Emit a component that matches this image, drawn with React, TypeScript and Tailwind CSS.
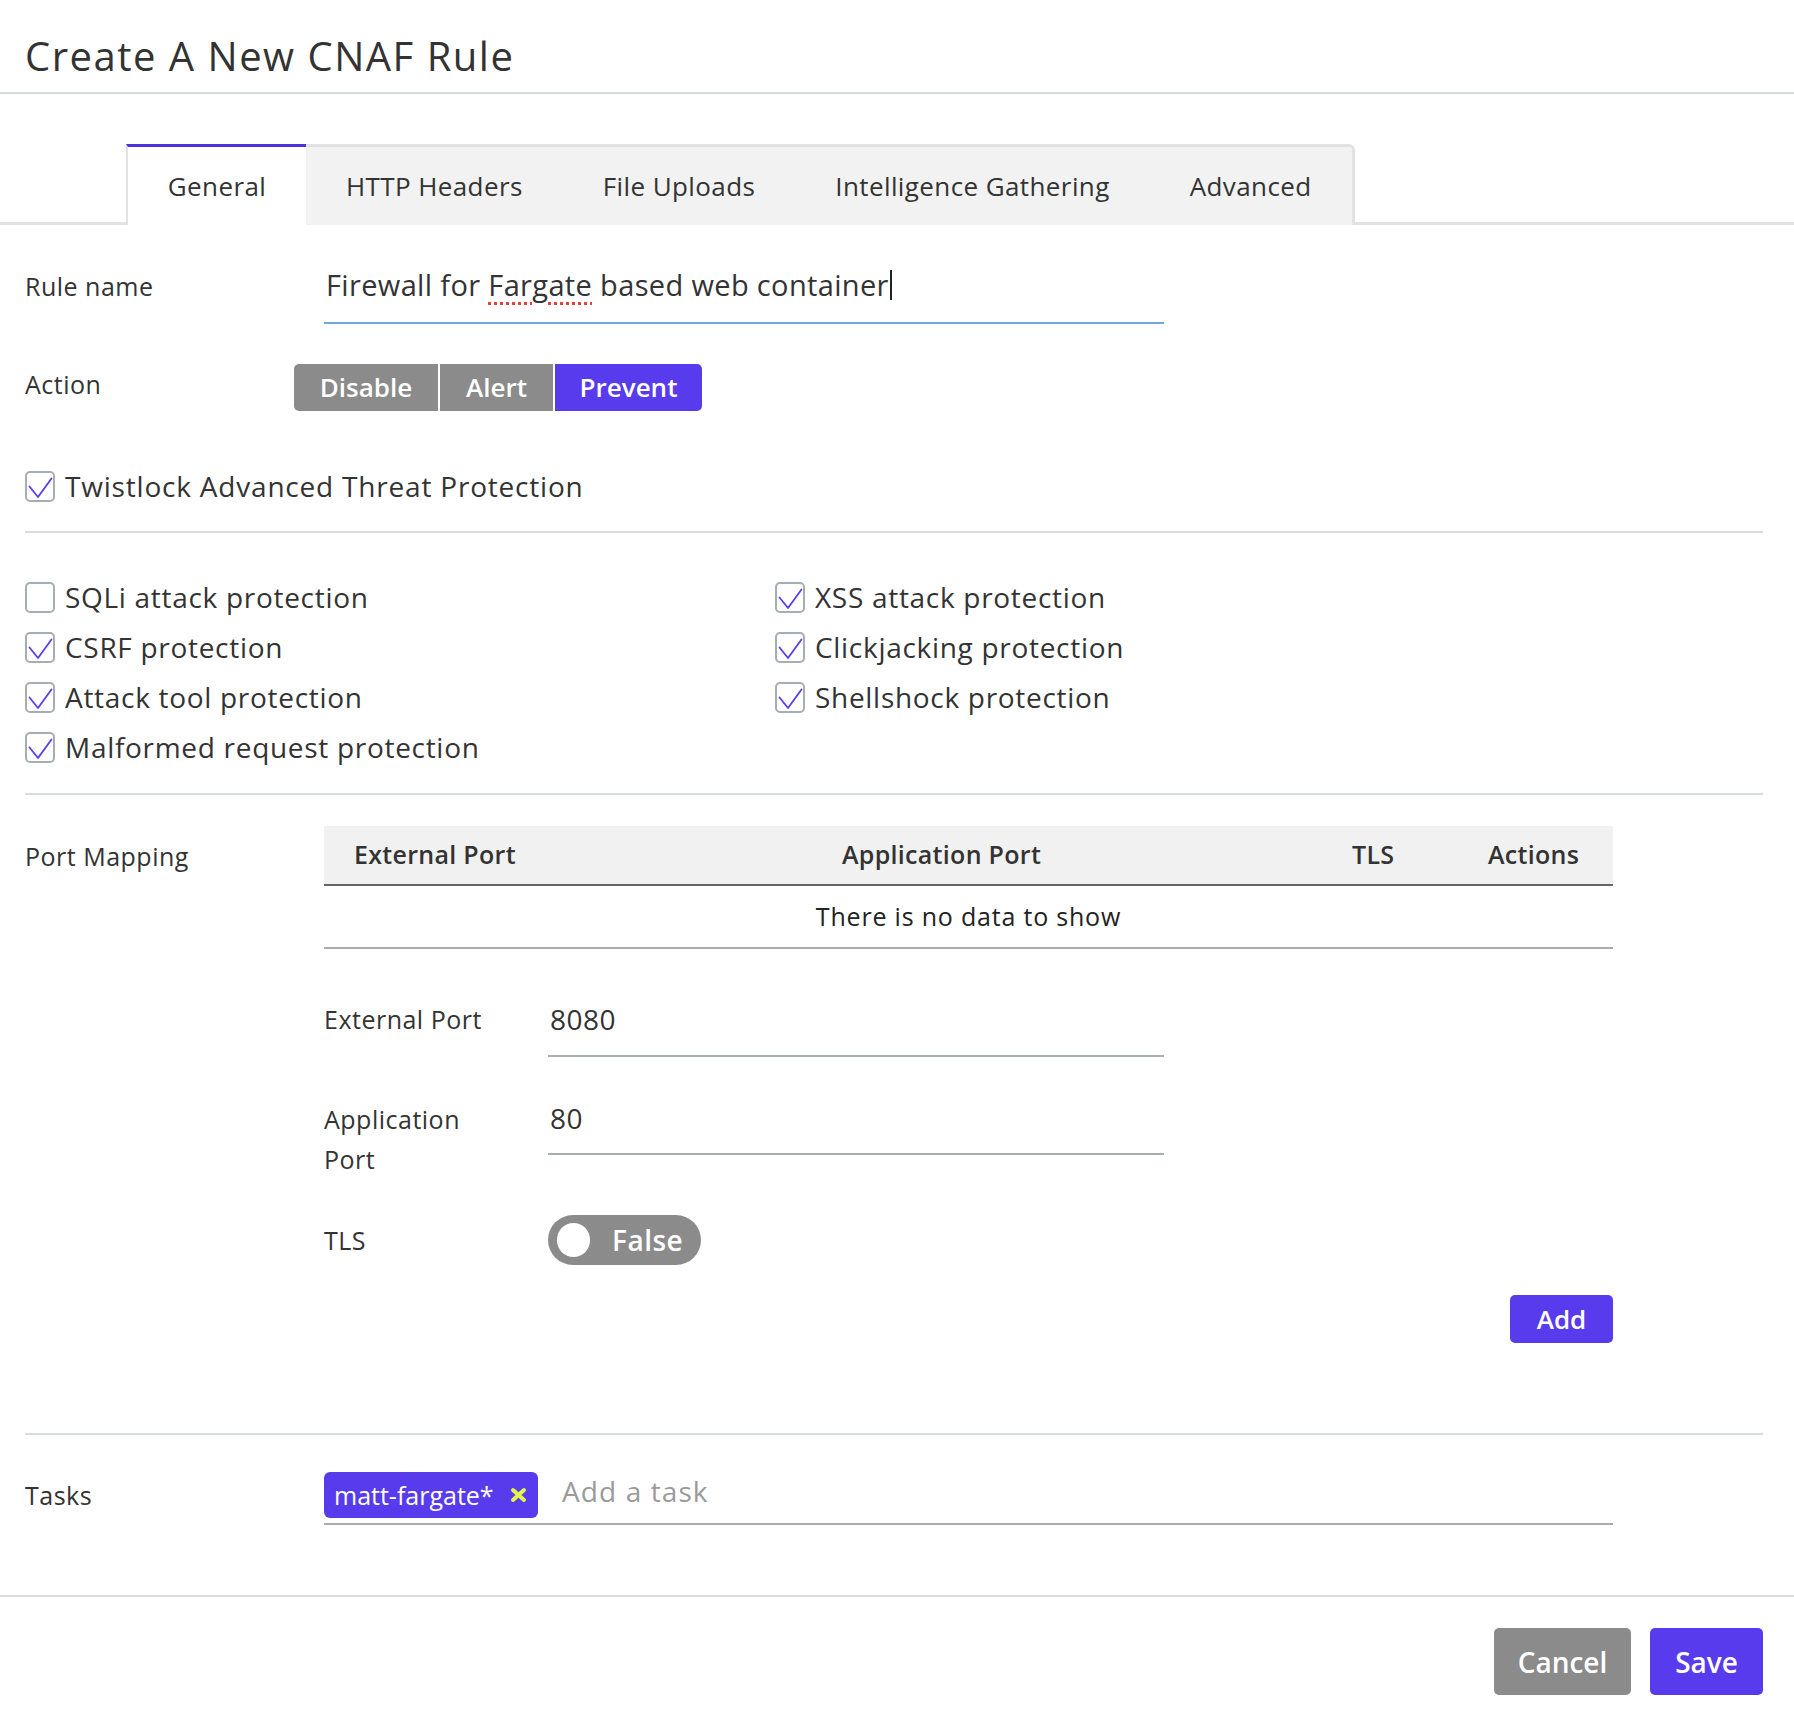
import React from "react";

const PURPLE = "bg-[#573bec]";

function Check({ checked }: { checked: boolean }) {
  return (
    <div className="w-[30px] h-[31px] shrink-0 rounded-[5px] border-2 border-[#a5aeb7] bg-white flex items-center justify-center">
      {checked && (
        <svg width="26" height="27" viewBox="0 0 26 27" fill="none">
          <path d="M2.5 13.5 L11 24 L24.5 5.5" stroke="#5a3cf0" strokeWidth="1.8" strokeLinecap="round" strokeLinejoin="round" />
        </svg>
      )}
    </div>
  );
}

function CheckItem({ checked, label }: { checked: boolean; label: string }) {
  return (
    <div className="flex items-center gap-[10px] h-[50px]">
      <Check checked={checked} />
      <span className="text-[28px] leading-[36px] tracking-[0.7px] text-[#333]">{label}</span>
    </div>
  );
}

export default function App() {
  return (
    <div className="w-[1794px] min-h-[1720px] bg-white text-[#333] font-['Open_Sans',sans-serif]">
      {/* Header */}
      <div className="h-[94px] border-b-2 border-[#d5d9dc] pl-[25px] pt-[32px]">
        <h1 className="text-[40px] leading-[48px] font-normal tracking-[1.5px] text-[#333]">Create A New CNAF Rule</h1>
      </div>

      {/* Tabs */}
      <div className="mt-[50px] flex h-[81px]">
        <div className="w-[126px] border-b-[3px] border-[#e2e2e2]" />
        <div className="w-[180px] border-t-[3px] border-[#4e31dc] border-l-2 border-l-[#e2e2e2] bg-white flex items-center justify-center text-[26px] tracking-[0.4px] text-[#333]">
          General
        </div>
        <div className="flex bg-[#f2f2f2] border-t-[3px] border-r-[3px] border-[#e2e2e2] rounded-tr-[6px]">
          {["HTTP Headers", "File Uploads", "Intelligence Gathering", "Advanced"].map((t) => (
            <div key={t} className="px-10 flex items-center text-[26px] tracking-[0.4px] text-[#333]">
              {t}
            </div>
          ))}
        </div>
        <div className="flex-1 border-b-[3px] border-[#e2e2e2]" />
      </div>

      {/* Body */}
      <div className="pl-[25px] pr-[31px]">
        {/* Rule name */}
        <div className="mt-[37px] flex items-start">
          <div className="w-[299px] mt-[8px] text-[25px] leading-[32px] tracking-[0.5px]">Rule name</div>
          <div className="w-[840px] h-[62px] border-b-2 border-[#6ea8dc] pt-[5px] pl-[2px]">
            <div className="text-[29px] leading-[36px] tracking-[0.35px] text-[#333] flex items-center whitespace-nowrap">
              <span>Firewall for&nbsp;</span>
              <span className="underline decoration-dotted decoration-[#e0433a] decoration-[3px] underline-offset-[6px]">Fargate</span>
              <span>&nbsp;based web container</span>
              <span className="inline-block w-[2px] h-[30px] bg-[#222] ml-[1px]" />
            </div>
          </div>
        </div>

        {/* Action */}
        <div className="mt-[40px] flex items-start">
          <div className="w-[269px] mt-[4px] text-[25px] leading-[32px] tracking-[0.5px]">Action</div>
          <div className="flex gap-[2px] h-[47px]">
            <div className="w-[144px] rounded-l-[5px] bg-[#8b8b8b] text-white font-semibold text-[26px] flex items-center justify-center">Disable</div>
            <div className="w-[113px] bg-[#8b8b8b] text-white font-semibold text-[26px] flex items-center justify-center">Alert</div>
            <div className={`w-[147px] rounded-r-[5px] ${PURPLE} text-white font-semibold text-[26px] flex items-center justify-center`}>Prevent</div>
          </div>
        </div>

        {/* Twistlock ATP */}
        <div className="mt-[59px] flex items-center gap-[10px] h-[32px]">
          <Check checked={true} />
          <span className="text-[28px] leading-[36px] tracking-[0.8px]">Twistlock Advanced Threat Protection</span>
        </div>

        <div className="mt-[29px] h-[2px] bg-[#d8dcdf]" />

        {/* Protections grid */}
        <div className="mt-[39px] grid grid-cols-[750px_1fr]">
          <CheckItem checked={false} label="SQLi attack protection" />
          <CheckItem checked={true} label="XSS attack protection" />
          <CheckItem checked={true} label="CSRF protection" />
          <CheckItem checked={true} label="Clickjacking protection" />
          <CheckItem checked={true} label="Attack tool protection" />
          <CheckItem checked={true} label="Shellshock protection" />
          <CheckItem checked={true} label="Malformed request protection" />
        </div>

        <div className="mt-[21px] h-[2px] bg-[#d8dcdf]" />

        {/* Port mapping */}
        <div className="mt-[31px] flex items-start">
          <div className="w-[299px] mt-[14px] text-[25px] leading-[32px] tracking-[0.5px]">Port Mapping</div>
          <div className="w-[1289px]">
            <div className="h-[60px] bg-[#f1f1f1] border-b-2 border-[#666] flex items-center font-semibold text-[25px] tracking-[0.3px] text-[#333]">
              <div className="w-[488px] pl-[30px]">External Port</div>
              <div className="w-[510px] pl-[30px]">Application Port</div>
              <div className="w-[136px] pl-[30px]">TLS</div>
              <div className="w-[155px] pl-[30px]">Actions</div>
            </div>
            <div className="h-[63px] border-b-2 border-[#a6adb3] flex items-center justify-center text-[25px] tracking-[0.8px] text-[#222]">
              There is no data to show
            </div>

            {/* External port */}
            <div className="mt-[51px] flex items-start">
              <div className="w-[224px] text-[25px] leading-[38px] tracking-[0.5px]">External Port</div>
              <div className="w-[616px] h-[57px] border-b-2 border-[#a6adb3] pl-[2px] text-[28px] leading-[38px] tracking-[0.5px]">8080</div>
            </div>

            {/* Application port */}
            <div className="mt-[42px] flex items-start">
              <div className="w-[224px] text-[25px] leading-[40px] tracking-[0.5px]">
                Application
                <br />
                Port
              </div>
              <div className="w-[616px] h-[56px] border-b-2 border-[#a6adb3] pl-[2px] text-[28px] leading-[38px] tracking-[0.5px]">80</div>
            </div>

            {/* TLS */}
            <div className="mt-[36px] flex items-center">
              <div className="w-[224px] text-[25px] leading-[32px] tracking-[0.5px]">TLS</div>
              <div className="w-[153px] h-[50px] rounded-full bg-[#8b8b8b] flex items-center pl-[9px]">
                <div className="w-[33px] h-[34px] rounded-full bg-white" />
                <span className="ml-[22px] text-white font-semibold text-[28px] leading-[34px] tracking-[0.5px]">False</span>
              </div>
            </div>

            <div className="mt-[30px] flex justify-end">
              <div className={`w-[103px] h-[48px] rounded-[5px] ${PURPLE} text-white font-semibold text-[26px] flex items-center justify-center`}>Add</div>
            </div>
          </div>
        </div>

        <div className="mt-[90px] h-[2px] bg-[#d8dcdf]" />

        {/* Tasks */}
        <div className="mt-[37px] flex items-start">
          <div className="w-[299px] mt-[7px] text-[25px] leading-[32px] tracking-[0.5px]">Tasks</div>
          <div className="w-[1289px] flex items-center pb-[5px] border-b-2 border-[#a6adb3]">
            <div className={`h-[46px] w-[214px] rounded-[6px] ${PURPLE} flex items-center pl-[10px]`}>
              <span className="text-white text-[25px] leading-[32px]">matt-fargate*</span>
              <svg className="ml-[16px]" width="17" height="16" viewBox="0 0 17 16">
                <path d="M3 3 L14 13 M14 3 L3 13" stroke="#e4f54a" strokeWidth="4" strokeLinecap="round" />
              </svg>
            </div>
            <span className="ml-[24px] -mt-[8px] text-[28px] leading-[36px] tracking-[1.1px] text-[#9a9a9a]">Add a task</span>
          </div>
        </div>
      </div>

      {/* Footer */}
      <div className="mt-[70px] border-t-2 border-[#d8dcdf] pt-[31px] pr-[31px] pb-[25px] flex justify-end gap-[19px]">
        <div className="w-[137px] h-[67px] rounded-[5px] bg-[#8b8b8b] text-white font-semibold text-[28px] flex items-center justify-center">Cancel</div>
        <div className={`w-[113px] h-[67px] rounded-[5px] ${PURPLE} text-white font-semibold text-[28px] flex items-center justify-center`}>Save</div>
      </div>
    </div>
  );
}
